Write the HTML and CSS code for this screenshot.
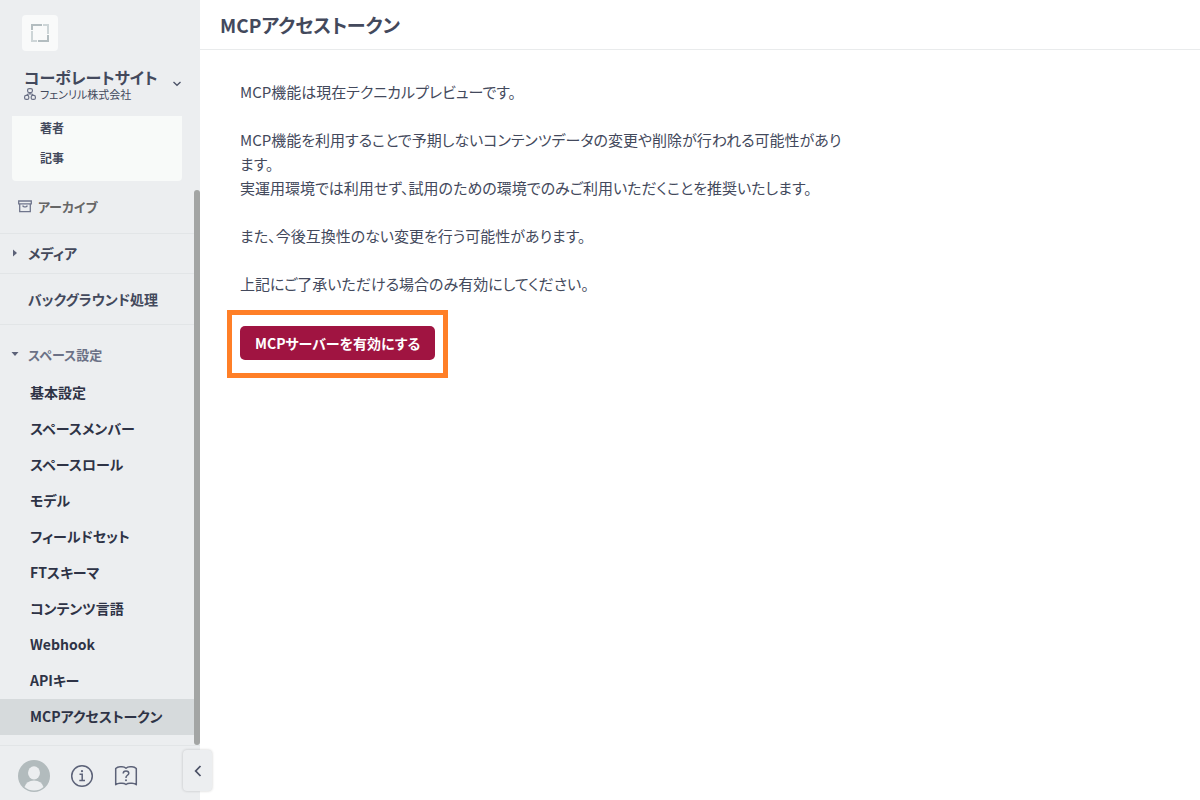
FILE: index.html
```
<!DOCTYPE html>
<html lang="ja">
  <head>
    <meta charset="utf-8" />
    <meta name="viewport" content="width=device-width, initial-scale=1" />
    <title>MCPアクセストークン</title>
    <link rel="stylesheet" href="styles.css">
  </head>
  <body>
    <aside class="sidebar">
      <header class="sidebar-header">
        <a href="#" class="logo" aria-label="ホーム">
          <svg width="20" height="20" viewBox="0 0 20 20">
            <path d="M1 7V1h11v2H3v4z" fill="#b3bdc0" />
            <path d="M13 1h6v10h-2V3h-4z" fill="#cdd5d7" />
            <path d="M19 12v7H8v-2h9v-5z" fill="#b3bdc0" />
            <path d="M7 19H1V8h2v9h4z" fill="#cdd5d7" />
          </svg>
        </a>
        <button class="space-switch" type="button">
          <span class="space-info">
            <span class="space-name">コーポレートサイト</span>
            <span class="org-name">
              <svg width="12" height="12" viewBox="0 0 12 12" fill="none" stroke="#6b7186" stroke-width="1.200">
                <rect x="3.600" y="0.600" width="4.800" height="4" rx="1.500" />
                <rect x="0.600" y="7.400" width="4.200" height="4" rx="1.500" />
                <rect x="7.200" y="7.400" width="4.200" height="4" rx="1.500" />
                <path d="M6 4.600v1.400M2.700 7.400L4 6h4l1.300 1.400" />
              </svg>
              フェンリル株式会社
            </span>
          </span>
          <svg class="chevron" width="10" height="8" viewBox="0 0 10 8" fill="none" stroke="#4c5267" stroke-width="1.300">
            <path d="M1.500 2L5 5.300l3.500-3.300" />
          </svg>
        </button>
      </header>

      <nav class="menu">
        <div class="model-box">
          <a href="#">著者</a>
          <a href="#">記事</a>
        </div>
        <a href="#" class="archive">
          <svg width="14" height="14" viewBox="0 0 14 14" fill="none" stroke="#6f758c" stroke-width="1.300">
            <path d="M0.700 2h12.600v2.800H0.700zM1.700 4.800v7.800h10.600V4.800M4.700 6.500q.3 1.300 1.500 1.300h1.600q1.200 0 1.500-1.300" />
          </svg>
          アーカイブ
        </a>
        <a href="#" class="media">
          <svg width="6" height="8" viewBox="0 0 6 8"><path d="M1 0.500L5 4 1 7.500z" fill="#5c6278" /></svg>
          メディア
        </a>
        <a href="#" class="background">バックグラウンド処理</a>
        <button class="group-title" type="button">
          <svg width="8" height="6" viewBox="0 0 8 6"><path d="M0.500 1h7L4 5z" fill="#5c6278" /></svg>
          スペース設定
        </button>
        <ul class="settings">
          <li><a href="#">基本設定</a></li>
          <li><a href="#">スペースメンバー</a></li>
          <li><a href="#">スペースロール</a></li>
          <li><a href="#">モデル</a></li>
          <li><a href="#">フィールドセット</a></li>
          <li><a href="#">FTスキーマ</a></li>
          <li><a href="#">コンテンツ言語</a></li>
          <li><a href="#">Webhook</a></li>
          <li><a href="#">APIキー</a></li>
          <li><a href="#" class="active">MCPアクセストークン</a></li>
        </ul>
        <div class="scroll-thumb"></div>
      </nav>

      <footer class="sidebar-footer">
        <button type="button" aria-label="アカウント">
          <svg width="32" height="32" viewBox="0 0 32 32">
            <circle cx="16" cy="16" r="16" fill="#b2bbbd" />
            <ellipse cx="16" cy="12.800" rx="6" ry="6.600" fill="#eceef0" />
            <path d="M6.500 27q2-6.500 9.500-6.500t9.500 6.500Q21.500 30.500 16 30.500T6.500 27z" fill="#eceef0" />
          </svg>
        </button>
        <button type="button" aria-label="情報">
          <svg width="24" height="24" viewBox="0 0 24 24" fill="none" stroke="#5c6278" stroke-width="1.500">
            <circle cx="12" cy="12" r="10.300" />
            <path d="M9.500 10.300h2.700v6M9.300 16.400h5.700" />
            <circle cx="12" cy="7.200" r="1.100" fill="#5c6278" stroke="none" />
          </svg>
        </button>
        <button type="button" aria-label="ヘルプ">
          <svg width="24" height="24" viewBox="0 0 24 24" fill="none" stroke="#5c6278" stroke-width="1.500" stroke-linejoin="round">
            <path d="M12 4.200Q10.500 2.700 8 2.700H6Q3.500 2.700 1.700 4.500V20.700Q3.500 19.300 6 19.300h2q2.500 0 4 1.200 1.500-1.200 4-1.200h2q2.500 0 4.300 1.400V4.500Q20.500 2.700 18 2.700h-2Q13.500 2.700 12 4.200z" />
            <path d="M9.200 9.500q0-2.600 2.800-2.600t2.800 2.300q0 1.300-1.500 2.100T12 14" />
            <circle cx="12" cy="16.300" r="1" fill="#5c6278" stroke="none" />
          </svg>
        </button>
      </footer>

      <button class="collapse" type="button" aria-label="サイドバーを閉じる">
        <svg width="8" height="12" viewBox="0 0 8 12" fill="none" stroke="#4c5267" stroke-width="1.800">
          <path d="M6.500 1L1.700 6l4.800 5" />
        </svg>
      </button>
    </aside>

    <main class="main">
      <header class="page-header">
        <h1>MCPアクセストークン</h1>
      </header>
      <section class="content">
        <p>MCP機能は現在テクニカルプレビューです。</p>
        <p>
          MCP機能を利用することで予期しないコンテンツデータの変更や削除が行われる可能性があります。<br>実運用環境では利用せず、試用のための環境でのみご利用いただくことを推奨いたします。
        </p>
        <p>また、今後互換性のない変更を行う可能性があります。</p>
        <p>上記にご了承いただける場合のみ有効にしてください。</p>
        <div class="highlight">
          <button class="enable-button" type="button">MCPサーバーを有効にする</button>
        </div>
      </section>
    </main>
  </body>
</html>
```

FILE: styles.css
```
* {
  box-sizing: border-box;
}
body {
  display: flex;
  height: 100vh;
  margin: 0;
  font-family: "Noto Sans CJK JP", sans-serif;
  font-feature-settings: "palt";
  font-size: 14px;
  color: #43495c;
  background-color: #fff;
}
a {
  color: inherit;
  text-decoration: none;
}
button {
  padding: 0;
  border: none;
  background: none;
  font: inherit;
  font-feature-settings: inherit;
  color: inherit;
  cursor: pointer;
}
svg {
  flex: none;
  display: block;
}

/* sidebar */
.sidebar {
  position: relative;
  flex: none;
  display: flex;
  flex-direction: column;
  width: 200px;
  background-color: #eceef0;
}
.sidebar-header {
  height: 116px;
  padding: 15px 18px 0 22px;
}
.logo {
  display: flex;
  align-items: center;
  justify-content: center;
  width: 36px;
  height: 36px;
  border-radius: 4px;
  background-color: #f9fafa;
}
.space-switch {
  display: flex;
  align-items: center;
  justify-content: space-between;
  width: 100%;
  margin-top: 16px;
  padding-left: 2px;
  text-align: left;
}
.space-info {
  display: flex;
  flex-direction: column;
}
.space-name {
  font-size: 16px;
  font-weight: bold;
  line-height: 20px;
}
.org-name {
  display: flex;
  align-items: center;
  gap: 4px;
  font-size: 11px;
  line-height: 14px;
}
.menu {
  position: relative;
  flex: 1;
  min-height: 0;
  padding-right: 6px;
  font-weight: bold;
}
.model-box {
  display: flex;
  flex-direction: column;
  gap: 6px;
  margin: 0 12px;
  padding: 0 28px 11px;
  border-radius: 0 0 4px 4px;
  background-color: #f8faf9;
  font-size: 12px;
  line-height: 24px;
}
.archive,
.media,
.background {
  display: flex;
  align-items: center;
  border-bottom: 1px solid #e2e5e7;
}
.archive {
  gap: 6px;
  height: 53px;
  padding: 0 0 2px 18px;
  font-size: 13px;
  color: #666;
}
.media {
  gap: 10px;
  height: 40px;
  padding: 0 0 2px 12px;
}
.background {
  height: 51px;
  padding-left: 28px;
}
.group-title {
  display: flex;
  align-items: center;
  gap: 9px;
  width: 100%;
  height: 50px;
  padding: 8px 0 0 11px;
  font-size: 13px;
  color: #6b7186;
}
.settings {
  margin: 0;
  padding: 0;
  list-style: none;
  color: #2e3346;
}
.settings a {
  display: block;
  padding: 0 0 2px 30px;
  line-height: 34px;
}
.settings .active {
  background-color: #d6dadc;
}
.scroll-thumb {
  position: absolute;
  top: 74px;
  right: 0;
  bottom: 0;
  width: 6px;
  border-radius: 3px;
  background-color: #a3a5a4;
}
.sidebar-footer {
  display: flex;
  align-items: center;
  gap: 20px;
  height: 55px;
  padding: 6px 18px 0;
  border-top: 1px solid #e2e5e7;
}
.collapse {
  position: absolute;
  right: -12px;
  bottom: 9px;
  display: flex;
  align-items: center;
  justify-content: center;
  width: 29px;
  height: 41px;
  border-radius: 4px;
  background-color: #eceef0;
  box-shadow: 0 0 3px rgba(0, 0, 0, 0.2);
}

/* main */
.main {
  flex: 1;
  min-width: 0;
}
.page-header {
  height: 50px;
  padding: 0 20px;
  border-bottom: 1px solid #e9ebec;
}
.page-header h1 {
  margin: 0;
  font-size: 19px;
  line-height: 50px;
}
.content {
  max-width: 652px;
  padding: 30px 0 0 40px;
  font-size: 15px;
  line-height: 24px;
}
.content p {
  margin: 0 0 24px;
}
.highlight {
  width: fit-content;
  margin: -10px 0 0 -13px;
  padding: 11px 8px 13px;
  border: 5px solid #ff7f27;
}
.enable-button {
  display: block;
  padding: 0 15px;
  border-radius: 5px;
  background-color: #a01441;
  color: #fff;
  font-size: 14px;
  font-weight: bold;
  line-height: 34px;
}
```
